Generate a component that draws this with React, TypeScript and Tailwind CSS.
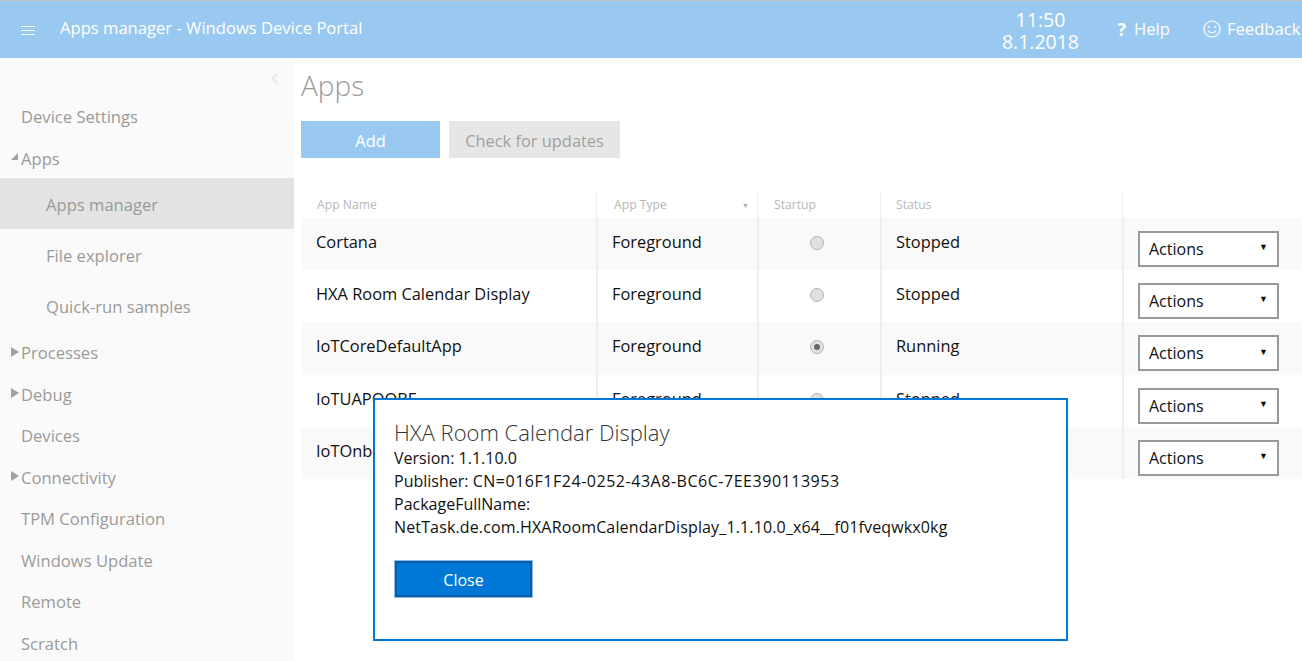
import React from 'react';
import { ChevronLeft } from 'lucide-react';

const FONT = "font-['Open_Sans','Noto_Sans',sans-serif]";

const APPS = [
  { name: 'Cortana', type: 'Foreground', running: false, status: 'Stopped' },
  { name: 'HXA Room Calendar Display', type: 'Foreground', running: false, status: 'Stopped' },
  { name: 'IoTCoreDefaultApp', type: 'Foreground', running: true, status: 'Running' },
  { name: 'IoTUAPOOBE', type: 'Foreground', running: false, status: 'Stopped' },
  { name: 'IoTOnboardingTask', type: 'Background', running: false, status: 'Stopped' },
];

function Caret({ open }: { open?: boolean }) {
  return (
    <svg width="10" height="10" viewBox="0 0 10 10" className="mr-[1px] w-[10px] h-[10px] shrink-0 -mt-1">
      {open ? <path d="M8 1 V8 H1 Z" fill="#a0a0a0" /> : <path d="M1 0 L9 5 L1 10 Z" fill="#a0a0a0" />}
    </svg>
  );
}

function NavItem({ label, caret }: { label: string; caret?: 'open' | 'closed' }) {
  return (
    <div className="h-[41.5px] shrink-0 flex items-center pl-[10px] pt-[4px] text-[16.6px] text-[#9a9a9a]">
      {caret ? <Caret open={caret === 'open'} /> : <span className="w-[11px] shrink-0" />}
      <span>{label}</span>
    </div>
  );
}

function SubItem({ label, active }: { label: string; active?: boolean }) {
  return (
    <div className={`h-[51px] shrink-0 flex items-center pl-[46px] pt-[3px] text-[16.6px] text-[#9a9a9a] ${active ? 'bg-[#e3e3e3]' : ''}`}>
      {label}
    </div>
  );
}

function Sidebar() {
  return (
    <aside className="w-[294px] shrink-0 bg-[#fafafa] flex flex-col overflow-hidden">
      <div className="h-[37px] shrink-0 flex justify-end pr-[11px] pt-[12px]">
        <ChevronLeft size={17} strokeWidth={3} className="text-[#e8e8e8]" />
      </div>
      <NavItem label="Device Settings" />
      <NavItem label="Apps" caret="open" />
      <SubItem label="Apps manager" active />
      <SubItem label="File explorer" />
      <SubItem label="Quick-run samples" />
      <NavItem label="Processes" caret="closed" />
      <NavItem label="Debug" caret="closed" />
      <NavItem label="Devices" />
      <NavItem label="Connectivity" caret="closed" />
      <NavItem label="TPM Configuration" />
      <NavItem label="Windows Update" />
      <NavItem label="Remote" />
      <NavItem label="Scratch" />
    </aside>
  );
}

function Radio({ checked }: { checked: boolean }) {
  return (
    <span className="w-[14px] h-[14px] rounded-full bg-[#e0e0e0] border border-[#b4b4b4] flex items-center justify-center">
      {checked && <span className="w-[6px] h-[6px] rounded-full bg-[#666666]" />}
    </span>
  );
}

const GRID = 'grid grid-cols-[295px_161px_123px_242px_1fr]';

function AppsTable() {
  return (
    <div className="mt-[34px] w-[1001px] ml-[7px]">
      <div className={`${GRID} h-[26px] text-[12.2px] text-[#b8b8b8]`}>
        <div className="pl-[16px] pt-[4px]">App Name</div>
        <div className="pl-[17px] pt-[4px] border-l border-[#f0f0f0] relative">
          App Type
          <span className="absolute right-[8px] top-[9px] text-[7px] text-[#a8a8a8]">▼</span>
        </div>
        <div className="pl-[16px] pt-[4px] border-l border-[#f0f0f0]">Startup</div>
        <div className="pl-[15px] pt-[4px] border-l border-[#f0f0f0]">Status</div>
        <div className="border-l border-[#f0f0f0]" />
      </div>
      {APPS.map((a, i) => (
        <div key={a.name} className={`${GRID} h-[52.2px] text-[16.4px] text-[#111111] ${i % 2 === 0 ? 'bg-[#f9f9f9]' : 'bg-white'}`}>
          <div className="pl-[15px] pt-[12px] whitespace-nowrap">{a.name}</div>
          <div className="pl-[14px] pt-[12px] border-l-2 border-[#eeeeee]">{a.type}</div>
          <div className="border-l-2 border-[#eeeeee] flex items-center justify-center pb-[2px] pr-[6px]">
            <Radio checked={a.running} />
          </div>
          <div className="pl-[14px] pt-[12px] border-l-2 border-[#eeeeee]">{a.status}</div>
          <div className="border-l-2 border-[#eeeeee] pl-[14px] pt-[13px]">
            <div className="w-[141px] h-[36px] border-2 border-[#999999] bg-white flex items-center justify-between pl-[9px] pr-[9px]">
              <span className="text-[16px]">Actions</span>
              <span className="text-[9px] text-[#111111] -mt-1">▼</span>
            </div>
          </div>
        </div>
      ))}
    </div>
  );
}

function Dialog() {
  return (
    <div className="absolute left-[373px] top-[398px] w-[695px] h-[243px] border-2 border-[#0078d7] bg-white pl-[19px] pt-[16px] text-[#111111]">
      <div className="text-[22px] font-light leading-[32px] text-[#333333]">HXA Room Calendar Display</div>
      <div className="text-[16px] leading-[23px] -mt-[1px]">Version: 1.1.10.0</div>
      <div className="text-[16px] leading-[23px]">
        Publisher: <span className="tracking-[0.53px]">CN=016F1F24-0252-43A8-BC6C-7EE390113953</span>
      </div>
      <div className="text-[16px] leading-[23px]">PackageFullName:</div>
      <div className="text-[16px] leading-[23px] tracking-[0.14px] whitespace-nowrap">NetTask.de.com.HXARoomCalendarDisplay_1.1.10.0_x64__f01fveqwkx0kg</div>
      <button className="mt-[22px] ml-[1px] w-[137px] h-[36px] bg-[#0078d7] border-2 border-[#0a5ba6] shadow-[0_0_0_1px_#8cbcea] text-white text-[16px] pt-[1px] block">
        Close
      </button>
    </div>
  );
}

export default function App() {
  return (
    <div className={`${FONT} relative w-[1302px] h-[661px] overflow-hidden bg-white flex flex-col`}>
      <header className="h-[58px] shrink-0 bg-[#99c9f0] border-t border-[#c4c4c4] flex items-center text-white">
        <svg width="14" height="9" viewBox="0 0 14 9" className="ml-[21px] mt-[2px]" stroke="white" strokeWidth="1">
          <path d="M0 .5 H14 M0 4.5 H14 M0 8.5 H14" />
        </svg>
        <span className="ml-[25px] text-[16.6px] -mt-[3px] whitespace-nowrap">Apps manager - Windows Device Portal</span>
        <div className="ml-[628px] mt-[2px] w-[100px] text-center text-[19.5px] leading-[22px]">
          <div>11:50</div>
          <div>8.1.2018</div>
        </div>
        <div className="ml-[27px] flex items-center text-[16.6px]">
          <span className="font-bold text-[18px] mr-[8px]">?</span>Help
        </div>
        <div className="ml-[33px] flex items-center text-[16.6px] whitespace-nowrap">
          <svg width="18" height="18" viewBox="0 0 18 18" fill="none" stroke="white" strokeWidth="1.2" className="mr-[6px]">
            <circle cx="9" cy="9" r="8" />
            <circle cx="6" cy="7" r="0.9" fill="white" stroke="none" />
            <circle cx="12" cy="7" r="0.9" fill="white" stroke="none" />
            <path d="M5 10.5 C6.5 13.5 11.5 13.5 13 10.5" />
          </svg>
          Feedback
        </div>
      </header>
      <div className="flex-1 flex min-h-0">
        <Sidebar />
        <main className="flex-1 min-w-0 flex flex-col">
          <div className="h-[5px] bg-[#fafafa] shrink-0" />
          <h1 className="ml-[7px] mt-[3px] text-[28px] font-light leading-[38px] text-[#9a9a9a]">Apps</h1>
          <div className="ml-[7px] mt-[17px] flex gap-[9px]">
            <button className="w-[139px] h-[37px] bg-[#99c9f0] text-white text-[16.4px] pt-[3px]">Add</button>
            <button className="w-[171px] h-[37px] bg-[#e6e6e6] text-[#a0a0a0] text-[16.4px] pt-[3px]">Check for updates</button>
          </div>
          <AppsTable />
        </main>
      </div>
      <Dialog />
    </div>
  );
}
